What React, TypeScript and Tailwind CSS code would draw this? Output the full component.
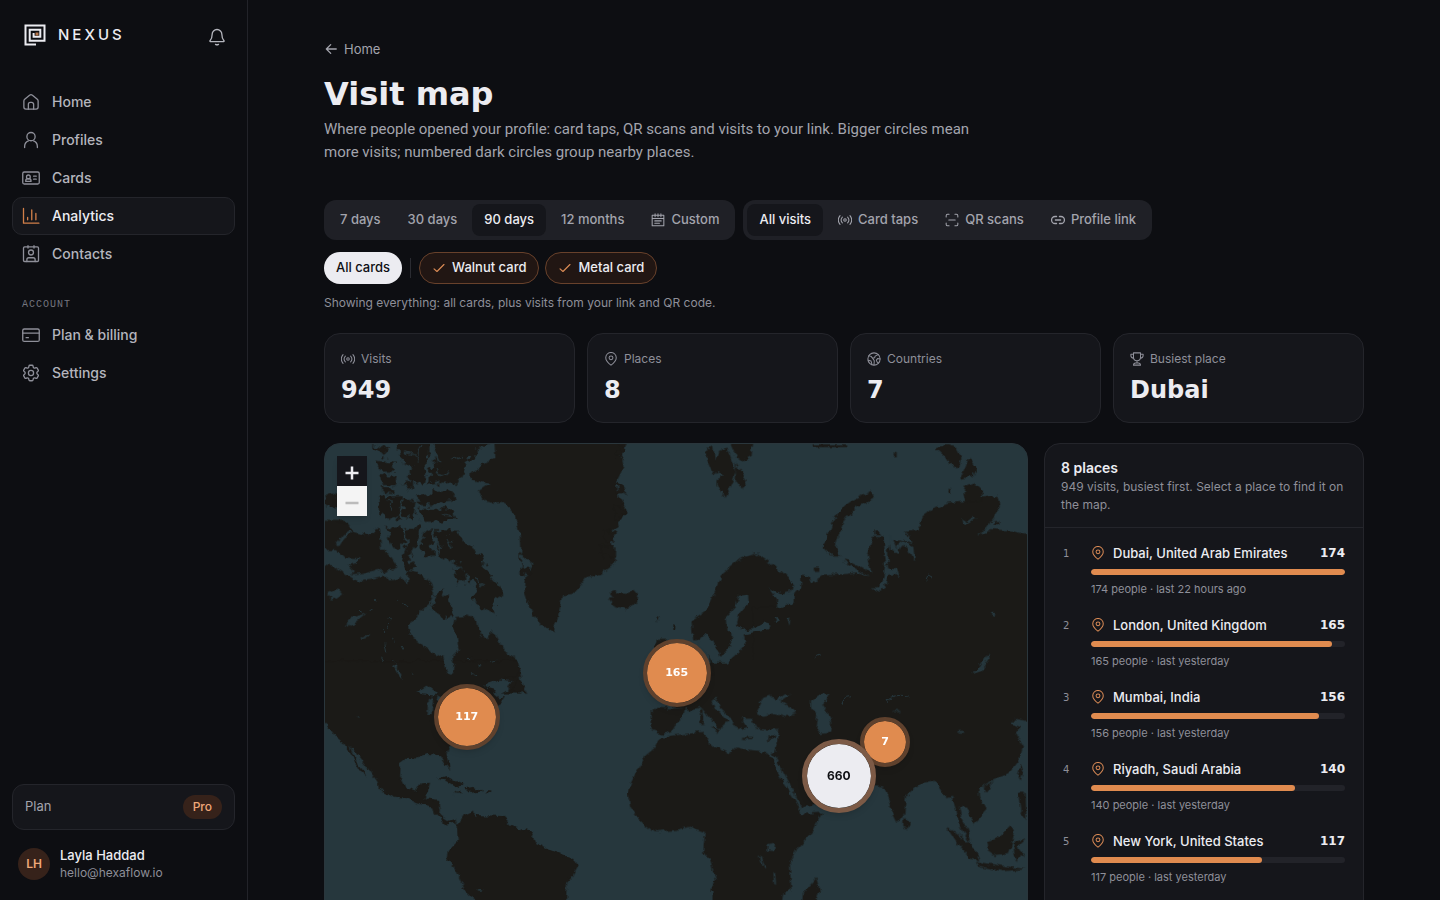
import type { ReactNode } from 'react';
import { HiOutlineCog6Tooth } from 'react-icons/hi2';

type IconProps = { className?: string };

function Icon({ className = 'size-[18px]', children }: IconProps & { children: ReactNode }) {
  return (
    <svg
      viewBox="0 0 24 24"
      fill="none"
      stroke="currentColor"
      strokeWidth={1.75}
      strokeLinecap="round"
      strokeLinejoin="round"
      aria-hidden="true"
      className={`shrink-0 ${className}`}
    >
      {children}
    </svg>
  );
}

const HomeIcon = (p: IconProps) => (
  <Icon {...p}>
    <path d="M2.5 10.6a3 3 0 0 1 1.100-2.300l6.500-5.300a3 3 0 0 1 3.800 0l6.500 5.300a3 3 0 0 1 1.100 2.300v8.200a2.700 2.700 0 0 1-2.700 2.700H5.200a2.700 2.700 0 0 1-2.700-2.700z" />
    <path d="M8.500 21.500V15a2.500 2.500 0 0 1 2.500-2.500h2a2.500 2.500 0 0 1 2.500 2.500v6.500" />
  </Icon>
);

const UserIcon = (p: IconProps) => (
  <Icon {...p}>
    <circle cx="12" cy="7.500" r="5.500" />
    <path d="M3.500 22v-1.500a8 8 0 0 1 5-7.300M20.500 22v-1.500a8 8 0 0 0-5-7.300" />
  </Icon>
);

const CardsIcon = (p: IconProps) => (
  <Icon {...p}>
    <rect x="1" y="4" width="22" height="16" rx="2" />
    <circle cx="8.500" cy="10.500" r="2.500" />
    <path d="M5 16.500v-1a2.500 2.500 0 0 1 2.500-2.500h2a2.500 2.500 0 0 1 2.500 2.500v1zM15.500 9.500H19M15.500 13.500H19" />
  </Icon>
);

const ChartIcon = (p: IconProps) => (
  <Icon {...p}>
    <path d="M2 2v19.500h20.500M7.500 17v-3M13 17V4M18.500 17V8.500" />
  </Icon>
);

const ContactIcon = (p: IconProps) => (
  <Icon {...p}>
    <rect x="2" y="2.500" width="20" height="19.500" rx="1.500" />
    <circle cx="12" cy="10" r="3.300" />
    <path d="M6.500 22v-2.500a2.500 2.500 0 0 1 2.500-2.500h6a2.500 2.500 0 0 1 2.500 2.500V22M8 1v3M16 1v3" />
  </Icon>
);

const BillingIcon = (p: IconProps) => (
  <Icon {...p}>
    <rect x="1" y="4" width="22" height="16.500" rx="2" />
    <path d="M1 9.500h22M5.500 15.500h3" />
  </Icon>
);

// The gear has wider built-in margins than the rest of the set
const SettingsIcon = ({ className = '' }: IconProps) => (
  <HiOutlineCog6Tooth className={`shrink-0 scale-115 ${className}`} />
);

const BellIcon = (p: IconProps) => (
  <Icon {...p}>
    <path d="M12 2a6.500 6.500 0 0 0-6.500 6.500c0 4.500-1 6.500-2.800 8.500-.4.500-.2 1.200.5 1.200h17.600c.7 0 .9-.7.5-1.200-1.800-2-2.800-4-2.800-8.500A6.500 6.500 0 0 0 12 2zM10 21.800c1.200.7 2.800.7 4 0" />
  </Icon>
);

const ArrowLeftIcon = (p: IconProps) => (
  <Icon {...p}>
    <path d="M21 12H4M11.500 4.500 4 12l7.500 7.500" strokeWidth={2.200} />
  </Icon>
);

const CalendarIcon = (p: IconProps) => (
  <Icon {...p}>
    <path d="M2 4h20v18H2zM2 9.500h20M7 1.500v5M12 1.500v5M17 1.500v5M6.500 13.500h11M6.500 17.500h8" />
  </Icon>
);

const TapIcon = (p: IconProps) => (
  <Icon {...p}>
    <circle cx="12" cy="12" r="2.200" />
    <path d="M7.500 7a7.500 7.500 0 0 0 0 10M16.500 7a7.500 7.500 0 0 1 0 10M3.500 4.500a12 12 0 0 0 0 15M20.500 4.500a12 12 0 0 1 0 15" />
  </Icon>
);

const ScanIcon = (p: IconProps) => (
  <Icon {...p}>
    <path d="M2 7V4.500A2.500 2.500 0 0 1 4.500 2H7M17 2h2.500A2.500 2.500 0 0 1 22 4.500V7M22 17v2.500a2.500 2.500 0 0 1-2.500 2.500H17M7 22H4.500A2.500 2.500 0 0 1 2 19.500V17M6.500 12h11" />
  </Icon>
);

const LinkIcon = (p: IconProps) => (
  <Icon {...p}>
    <path d="M9.500 18H7A6 6 0 0 1 7 6h2.500M14.500 6H17a6 6 0 0 1 0 12h-2.500M7.500 12h9" strokeWidth={2.200} />
  </Icon>
);

const PinIcon = (p: IconProps) => (
  <Icon {...p}>
    <path d="M12 22.500c-2.300-1.700-9-6.500-9-12.700a9 9 0 0 1 18 0c0 6.200-6.700 11-9 12.700z" />
    <circle cx="12" cy="10" r="3.300" />
  </Icon>
);

const GlobeIcon = (p: IconProps) => (
  <Icon {...p}>
    <circle cx="12" cy="12" r="10.500" />
    <path d="M3 6.500l4 1 2.500 3 3.500-.5 1-3 5-2.500M9.500 10.500l3 4.500-.5 7M2 14l5 1.500 1.500 6M22.500 12l-4-1-2.500 3 1.500 3.500 2 1.500" />
  </Icon>
);

const TrophyIcon = (p: IconProps) => (
  <Icon {...p}>
    <path d="M6 1.500h12V9a6 6 0 0 1-12 0zM6 4H1.500v2A4.500 4.500 0 0 0 6 10.500M18 4h4.500v2a4.500 4.500 0 0 1-4.500 4.500M12 15v4M6 22.500a3.500 3.500 0 0 1 3.500-3.500h5a3.500 3.500 0 0 1 3.500 3.500z" />
  </Icon>
);

const CheckIcon = (p: IconProps) => (
  <Icon {...p}>
    <path d="M3.500 13.500l5 4.500L20.500 6" strokeWidth={2} />
  </Icon>
);

const Logo = () => (
  <svg viewBox="0 0 22 22" fill="none" aria-hidden="true" className="size-[22px] shrink-0">
    <path d="M12 20.500H1.500V1.500H20.500V16.800H5.700V5.700H16.300V12.800H9.600V9" stroke="#ececf1" strokeWidth="2" />
    <rect x="11.500" y="8.500" width="3" height="3" fill="#b87548" />
  </svg>
);

const mainNav = [
  { label: 'Home', icon: HomeIcon },
  { label: 'Profiles', icon: UserIcon },
  { label: 'Cards', icon: CardsIcon },
  { label: 'Analytics', icon: ChartIcon, active: true },
  { label: 'Contacts', icon: ContactIcon },
];

const accountNav = [
  { label: 'Plan & billing', icon: BillingIcon },
  { label: 'Settings', icon: SettingsIcon },
];

const ranges = [
  { label: '7 days' },
  { label: '30 days' },
  { label: '90 days', active: true },
  { label: '12 months' },
  { label: 'Custom', icon: CalendarIcon },
];

const sources = [
  { label: 'All visits', active: true },
  { label: 'Card taps', icon: TapIcon },
  { label: 'QR scans', icon: ScanIcon },
  { label: 'Profile link', icon: LinkIcon },
];

const stats = [
  { label: 'Visits', value: '949', icon: TapIcon },
  { label: 'Places', value: '8', icon: PinIcon },
  { label: 'Countries', value: '7', icon: GlobeIcon },
  { label: 'Busiest place', value: 'Dubai', icon: TrophyIcon },
];

const places = [
  { name: 'Dubai, United Arab Emirates', visits: 174, last: '22 hours ago' },
  { name: 'London, United Kingdom', visits: 165, last: 'yesterday' },
  { name: 'Mumbai, India', visits: 156, last: 'yesterday' },
  { name: 'Riyadh, Saudi Arabia', visits: 140, last: 'yesterday' },
  { name: 'New York, United States', visits: 117, last: 'yesterday' },
];

type NavItem = { label: string; icon: (p: IconProps) => ReactNode; active?: boolean };

function NavList({ items }: { items: NavItem[] }) {
  return (
    <ul>
      {items.map((item) => (
        <li key={item.label}>
          <a
            href="#"
            aria-current={item.active ? 'page' : undefined}
            className={`flex h-[38px] items-center gap-3 rounded-[10px] border px-[9px] text-sm font-medium ${
              item.active ? 'border-[#24252b] bg-[#15161b] text-[#ececf1]' : 'border-transparent text-[#b4b5bd]'
            }`}
          >
            <item.icon className={item.active ? 'size-[18px] text-[#d17f49]' : 'size-[18px] text-[#8e8f99]'} />
            {item.label}
          </a>
        </li>
      ))}
    </ul>
  );
}

function Sidebar() {
  return (
    <aside className="sticky top-0 flex h-screen w-[248px] shrink-0 flex-col border-r border-[#222329] px-3 pb-4">
      <div className="flex items-center justify-between pt-[23px] pr-2 pl-3">
        <a href="#" className="flex items-center gap-3 text-[15px] font-medium tracking-[0.2em]">
          <Logo />
          NEXUS
        </a>
        <button type="button" aria-label="Notifications" className="mt-1 flex size-5 items-center justify-center text-[#b4b5bd]">
          <BellIcon />
        </button>
      </div>

      <nav className="mt-9 grow">
        <NavList items={mainNav} />
        <h2 className="mt-[22px] mb-px px-[10px] font-['Liberation_Mono',monospace] text-[10px] leading-5 tracking-widest text-[#74757f]">
          ACCOUNT
        </h2>
        <NavList items={accountNav} />
      </nav>

      <div className="flex h-[46px] items-center justify-between rounded-xl border border-[#24252b] bg-[#15161b] px-3 text-[13px] text-[#a3a4ad]">
        Plan
        <span className="rounded-full bg-[#36221a] px-[10px] py-[3px] text-xs leading-[18px] font-medium text-[#f0a878]">Pro</span>
      </div>
      <div className="mt-[14px] flex items-center gap-[10px] px-[6px] py-[2px]">
        <span className="flex size-8 items-center justify-center rounded-full bg-[#36221a] text-xs font-semibold text-[#f0a878]">LH</span>
        <div>
          <p className="text-[13px] leading-[18px] font-medium">Layla Haddad</p>
          <p className="text-xs leading-[18px] text-[#8e8f99]">hello@hexaflow.io</p>
        </div>
      </div>
    </aside>
  );
}

type Segment = { label: string; icon?: (p: IconProps) => ReactNode; active?: boolean };

function Segmented({ label, items }: { label: string; items: Segment[] }) {
  return (
    <div role="group" aria-label={label} className="flex gap-[3px] rounded-xl bg-[#1f2026] p-1">
      {items.map((item) => (
        <button
          key={item.label}
          type="button"
          aria-pressed={!!item.active}
          className={`flex h-8 items-center gap-[6px] rounded-lg px-3 text-[13px] font-medium whitespace-nowrap ${
            item.active ? 'bg-[#15161b] text-[#ececf1]' : 'text-[#a3a4ad]'
          }`}
        >
          {item.icon && <item.icon className="size-[14px]" />}
          {item.label}
        </button>
      ))}
    </div>
  );
}

function Filters() {
  return (
    <div className="mt-9">
      <div className="flex flex-wrap gap-2">
        <Segmented label="Period" items={ranges} />
        <Segmented label="Source" items={sources} />
      </div>
      <div className="mt-3 flex items-center gap-2 text-[13px] font-medium">
        <button type="button" className="h-8 rounded-full bg-[#ececf1] px-3 text-[#0e0f13]">
          All cards
        </button>
        <span className="h-5 w-px bg-[#2a2b31]" />
        <div className="flex gap-[6px]">
          {['Walnut card', 'Metal card'].map((card) => (
            <button
              key={card}
              type="button"
              aria-pressed="true"
              className="flex h-8 items-center gap-[6px] rounded-full border border-[#68412b] bg-[#211613] px-3"
            >
              <CheckIcon className="size-[14px] text-[#d98a55]" />
              {card}
            </button>
          ))}
        </div>
      </div>
      <p className="mt-[10px] text-xs leading-[18px] text-[#8e8f99]">
        Showing everything: all cards, plus visits from your link and QR code.
      </p>
    </div>
  );
}

// World tile artwork. Land is drawn first, then inland seas and straits on top of it.
function WorldMap() {
  return (
    <svg
      viewBox="0 0 2112 1680"
      preserveAspectRatio="xMidYMin slice"
      aria-hidden="true"
      className="block h-full w-full"
    >
      <defs>
        <filter id="coast" x="0" y="0" width="100%" height="100%" colorInterpolationFilters="sRGB">
          <feTurbulence type="fractalNoise" baseFrequency="0.045" numOctaves="3" seed="7" result="noise" />
          <feDisplacementMap in="SourceGraphic" in2="noise" scale="20" xChannelSelector="R" yChannelSelector="G" />
        </filter>
        <filter id="fjords" x="0" y="0" width="100%" height="100%" colorInterpolationFilters="sRGB">
          <feTurbulence type="fractalNoise" baseFrequency="0.05" numOctaves="2" seed="3" result="noise" />
          <feDisplacementMap in="SourceGraphic" in2="noise" scale="34" xChannelSelector="R" yChannelSelector="G" />
        </filter>
      </defs>

      <rect width="2112" height="1680" fill="#26373d" />

      <g filter="url(#coast)">
        <g fill="#1b1a17">
          {/* Canada and Greenland */}
          <g transform="translate(-12 -9)">
            <path d="M-20 240H75L100 275L150 285L165 265L178 265L180 320L210 350L230 380L190 395L170 385L130 400L85 405L110 420L150 415L190 405L210 420L240 410L260 430L262 390L300 400L330 430L340 460L325 490L290 520L265 560L275 590L310 620L350 640L370 650L378 690L395 700L400 680L395 650L415 630L410 600L400 560L405 530L440 525L470 540L478 585L500 600L515 570L530 590L550 630L590 660L600 720V760H-20Z" />
            <path d="M520 -20L525 50L450 95L450 115L505 130L475 150L490 180L510 185L550 183L580 215L598 280L600 340L640 370L620 400L612 450L640 530L665 555L700 572L720 500L725 465L760 460L800 410L840 400L880 370L885 350L870 280L900 240L920 210L895 170L890 120L910 80L905 40L925 -20Z" />
          </g>
          {/* North Atlantic, Scandinavia */}
          <g transform="translate(648 -9)">
            <path d="M205 455L218 470L205 472L215 485L222 498L255 508L290 485L295 465L280 448L260 460L235 458L225 448Z" />
            <path d="M500 25L520 20L525 60L535 30L560 20L580 70L588 90L578 120L555 170L530 132L530 118L550 108L515 90L502 60Z" />
            <path d="M565 -10L642 -10L635 48L610 62L590 48ZM588 65L618 120L605 142L588 120Z" />
            <path d="M455 540L500 510L530 440L545 400L600 355L650 338L680 360L720 390L762 430L755 450L735 455L740 490L780 480V760H440V700L515 670L500 620L480 600L460 600Z" />
            <path d="M346 598L384 598L372 625L400 660L395 720L340 720L352 660L340 630ZM350 528h8v12h-8zM400 553h6v14h-6z" />
          </g>
          {/* Siberia */}
          <g transform="translate(1368 -9)">
            <path d="M-80 500H0L35 490L45 455L65 435L65 405L85 408L90 430L130 405L200 400L230 395L270 408L230 385L190 360L210 362L275 395L265 340L280 288L310 290L320 330L345 300L365 300L400 310L380 270L420 265L430 230L460 205L500 190L560 180L590 172L655 165L662 200L620 260L600 285L640 265L700 270L770 290V760H-80Z" />
            <path d="M275 150L284 170L230 202L198 230L178 280L168 320L182 348L155 347L130 320L142 285L155 250L185 203L220 178Z" />
            <path d="M468 20L500 12L530 18L547 50L540 80L510 68L495 45ZM570 50L592 85L582 107L543 114ZM553 160L558 135L580 126L608 150L608 180L560 184Z" />
            <path d="M103 378h16v16h-16zM288 272h12v12h-12zM340 36h12v10h-12zM505 145h10v10h-10zM644 238h14v12h-14zM100 10h100v8h-100z" />
          </g>
          {/* Americas */}
          <g transform="translate(-12 651)">
            <path d="M-20 0H590L600 30L585 45L540 60L490 78L535 115L555 105L540 128L500 150L440 220L385 260L378 285L388 330L370 310L355 285L320 282L290 292L260 290L240 305L238 350L255 385L285 395L300 370L328 368L315 415L355 420L360 450L358 470L380 484L405 476L412 500L402 488L375 494L340 460L335 440L290 430L260 415L220 410L175 385L170 365L130 310L110 285L85 252L100 290L138 350L120 335L90 285L70 250L45 230L15 190L-20 160Z" />
            <path d="M568 92L590 58L604 64L620 98L600 92L588 98Z" />
            <path d="M350 357L375 348L432 376L410 382L375 362ZM435 385L460 380L487 394L450 399ZM498 394h14v6h-14zM403 395h16v6h-16z" />
            <path d="M408 500L430 465L460 452L465 465L545 468L575 500L630 515L645 550L700 575L765 600L775 618L760 645L740 670L735 760L700 880L620 1020L520 1060L505 860L472 722L435 695L400 620L380 600L385 570L412 540Z" />
          </g>
          {/* Europe, Africa, South Asia */}
          <g transform="translate(888 651)">
            <path d="M95 143L195 145L190 170L165 195L155 212L130 220L95 210Z" />
            <path d="M120 235L145 228L250 215L265 230L262 250L330 280L350 262L375 270L440 278L455 290L480 350L520 410L540 445L545 462L607 458L580 515L530 570L510 605L515 690L490 705L480 780V1040H320L275 740L275 690L288 660L270 600L250 575L255 517L210 500L170 510L105 517L60 485L30 440L25 400L35 360L75 290L100 270Z" />
            <path d="M160 40H280V0H1260V185L1190 173L1175 190L1207 200L1190 222L1212 260L1200 300L1170 340L1120 360L1078 385L1080 410L1102 450L1065 492L1045 447L1022 440L1030 475L1045 505L1058 540L1050 545L1020 500L1012 450L998 410L983 415L960 378L945 358L915 365L885 387L860 410L855 460L835 487L812 440L795 380L765 375L700 380L640 415L580 435L545 442L510 370L470 295L455 280L465 275L475 240L478 205L440 208L410 205L395 175L365 175L380 200L355 210L330 170L300 140L288 112L275 122L285 145L328 188L312 192L302 208L275 178L248 142L215 150L160 140Z" />
            <path d="M852 470L872 490L866 505L852 502ZM1097 376L1117 368L1113 386L1100 394ZM1206 312L1214 330L1205 358L1197 345ZM1198 398L1220 398L1222 480L1204 455Z" />
            <path d="M983 503L1012 518L1062 562L1078 602L1052 596L1010 545ZM1072 605L1100 610L1160 620L1220 628L1150 634L1080 618ZM1102 545L1140 530L1175 496L1188 515L1170 582L1130 588L1105 570ZM1183 550L1220 538L1196 562L1216 592L1202 582L1196 604L1186 582Z" />
            <path d="M370 230h26v6h-26zM442 232l24 -6v8l-20 6zM273 203L300 207L295 218ZM240 165h12v26h-11zM243 146h8v16h-8z" />
            <path d="M590 655L600 690L570 800L545 790L550 700Z" />
          </g>
        </g>

        <g fill="#26373d">
          {/* Great Lakes, St Lawrence, James Bay */}
          <g transform="translate(-12 651)">
            <path d="M288 97L320 73L348 93L340 106L310 103ZM321 118L335 108L337 120L333 162L321 160ZM345 105L368 112L360 128ZM488 76L540 58L572 62L560 92L530 108L522 90ZM368 -10L388 -10L402 15L396 44L380 38ZM216 15L230 12L228 26L242 36L248 60L236 52Z" />
            <path d="M462 450h5v24h-5zM108 165h5v4h-5zM472 688h12v5h-12z" />
          </g>
          {/* Northern lakes and inlets */}
          <g transform="translate(-12 -9)">
            <path d="M-10 325L45 325L70 350L120 353L105 368L80 372L102 395L85 408L40 378L-10 372ZM44 312L66 284L90 268L94 276L68 294L52 318Z" />
            <path d="M76 548L100 530L138 518L112 540L88 560ZM18 460L52 443L64 458L34 478ZM118 592L148 580L144 588L122 596Z" />
          </g>
          {/* Baltic and White Sea */}
          <g transform="translate(648 -9)">
            <path d="M600 465L625 462L627 485L597 520L592 550L602 568L640 563L672 546L692 552L688 570L650 574L612 582L617 610L592 640L560 667L520 667L505 640L480 615L470 598L500 583L520 600L542 650L568 620L580 590L560 572L558 530L585 500Z" />
            <path d="M684 436L720 460L765 462L765 484L728 502L712 498L712 476Z" />
            <path d="M702 530L718 536L712 548ZM742 536L752 530L750 556Z" />
          </g>
          {/* Ob, Yenisei, Baikal */}
          <g transform="translate(1368 -9)">
            <path d="M311 318L322 318L326 383L350 386L358 410L345 402L327 402L317 440L300 454L273 440L298 440L311 415L317 370ZM333 285L352 325L365 302L402 318L407 362L397 352L385 322L367 316L355 337L333 325Z" />
            <path d="M550 232L560 234L566 242L585 228L588 234L566 248L552 244ZM628 638L632 655L607 692L578 702L602 680ZM636 514h12v8h-12z" />
          </g>
          {/* Black Sea, Caspian, Lake Victoria */}
          <g transform="translate(888 651)">
            <path d="M430 110L450 103L470 120L502 98L512 104L485 122L520 145L528 160L500 171L460 160L430 167L408 155ZM574 120L610 96L627 103L620 125L605 130L625 160L635 180L632 217L605 222L590 205L595 170L574 140ZM444 555L467 551L462 577L442 575Z" />
            <path d="M420 588L426 588L436 626L430 624ZM461 640L467 640L469 676L463 672ZM1018 212h14v5h-14zM820 152h20v4h-20z" />
          </g>
        </g>
        <g fill="none" stroke="#26373d" strokeWidth="3">
          <path d="M1688 772Q1706 750 1756 758M1555 782Q1560 762 1580 760M1474 650Q1478 636 1492 634M1808 408L1814 394L1826 400" />
          <path d="M190 520L196 530M192 544L188 556M180 600L186 630M200 586L206 600M172 560L178 566M230 480L250 486M214 470L222 474M430 650L440 640M500 655L515 650M458 664L470 668M150 470L160 476M134 498L146 494M96 500L108 506M250 560L254 572M226 610L232 622M206 650L214 660M170 640L176 652M258 690L266 698M440 690L452 694" />
        </g>
      </g>

      {/* Arctic archipelago */}
      <g filter="url(#fjords)">
        <g fill="#1b1a17" transform="translate(-12 -9)">
          <path d="M336 -20L510 -20L510 10L470 30L440 60L430 90L410 130L385 122L325 132L328 90L345 60Z" />
          <path d="M228 -20L326 -20L320 70L308 134L258 114L272 84L238 55Z" />
          <path d="M285 170L330 156L388 150L406 178L355 182L330 194L295 192ZM296 204L398 206L408 238L306 240Z" />
          <path d="M244 178L284 178L278 236L248 228ZM176 168L240 166L238 226L215 238L178 217ZM164 56L217 62L222 92L180 92ZM178 102L228 105L222 136L188 132ZM244 130L280 120L280 146ZM-10 180L50 158L55 200L20 196ZM150 10L205 20L190 45ZM186 140L224 144L218 160L190 158Z" />
          <path d="M198 262L244 260L250 307L228 330L203 297ZM254 263L300 260L290 307L278 322L267 352L284 380L262 392L243 362L258 310Z" />
          <path d="M345 268L415 270L430 300L482 345L502 398L542 440L545 466L520 478L528 525L490 505L450 478L470 440L440 405L415 372L372 360L355 345ZM318 263L338 268L332 347L310 352L302 310Z" />
          <path d="M340 468L366 453L394 500L404 517L376 536L328 502ZM396 382L432 392L438 422L408 427Z" />
          <path d="M596 340L606 350L602 380L620 372L632 380L616 410L604 398Z" />
        </g>
        {/* east Greenland fjords */}
        <g fill="#1b1a17" transform="translate(648 -9)">
          <path d="M230 10L262 20L240 60ZM225 110L256 150L236 160ZM220 190L256 215L226 240ZM190 265L232 275L220 300L190 295ZM175 310L226 320L224 350L190 345Z" />
        </g>
        {/* narrow channels through the islands */}
        <g fill="none" stroke="#26373d" strokeWidth="5" transform="translate(-12 -9)">
          <path d="M330 0L345 40L360 70M296 20L290 60M390 60L420 50M250 30L285 44M345 90L385 100M206 180L212 210M350 300L362 320L356 344M380 290L392 320M460 410L490 430M370 222L396 226" />
        </g>
      </g>
    </svg>
  );
}

function VisitMap() {
  return (
    <div className="relative h-[560px] overflow-hidden rounded-2xl border border-[#2a363c] bg-[#26373d]">
      <WorldMap />
      <div className="absolute top-3 left-3 flex flex-col shadow-md">
        <button type="button" aria-label="Zoom in" className="flex size-[30px] items-center justify-center bg-[#15161b]">
          <svg viewBox="0 0 14 14" className="mt-1 size-[14px]" stroke="#ececf1" strokeWidth="2.500">
            <path d="M0.500 7h13M7 0.500v13" />
          </svg>
        </button>
        <button type="button" aria-label="Zoom out" disabled className="flex size-[30px] items-center justify-center bg-[#f4f4f4]">
          <svg viewBox="0 0 14 14" className="mt-1 size-[14px]" stroke="#bbbbbb" strokeWidth="2.500">
            <path d="M0.500 7h13" />
          </svg>
        </button>
      </div>

      <button
        type="button"
        className="absolute top-[273px] left-[20.200%] flex size-[66px] -translate-1/2 items-center justify-center rounded-full border-4 border-[#5f412d] bg-[#e08b4f] bg-clip-padding font-['DejaVu_Sans',sans-serif] text-[11px] font-bold text-white shadow-md"
      >
        117
      </button>
      <button
        type="button"
        className="absolute top-[229px] left-[50.100%] flex size-[68px] -translate-1/2 items-center justify-center rounded-full border-4 border-[#5f412d] bg-[#e08b4f] bg-clip-padding font-['DejaVu_Sans',sans-serif] text-[11px] font-bold text-white shadow-md"
      >
        165
      </button>
      <button
        type="button"
        className="absolute top-[298px] left-[79.800%] flex size-[50px] -translate-1/2 items-center justify-center rounded-full border-4 border-[#5f412d] bg-[#e08b4f] bg-clip-padding font-['DejaVu_Sans',sans-serif] text-[11px] font-bold text-white shadow-md"
      >
        7
      </button>
      <button
        type="button"
        className="absolute top-[332px] left-[73.200%] flex size-[74px] -translate-1/2 items-center justify-center rounded-full border-5 border-[#7c5a46] bg-[#ececf1] bg-clip-padding text-xs font-bold text-[#0e0f13] shadow-md"
      >
        660
      </button>
    </div>
  );
}

function PlacesPanel() {
  const max = places[0].visits;

  return (
    <section className="overflow-hidden rounded-2xl border border-[#24252b] bg-[#15161b]">
      <header className="border-b border-[#24252b] px-4 py-[13px]">
        <h2 className="text-sm leading-[21px] font-semibold">8 places</h2>
        <p className="text-xs leading-[18px] text-[#8e8f99]">949 visits, busiest first. Select a place to find it on the map.</p>
      </header>
      <ol className="px-2 py-[6px]">
        {places.map((place, index) => (
          <li key={place.name}>
            <button type="button" className="flex w-full gap-2 px-[10px] py-[9px] text-left">
              <span className="w-5 font-['DejaVu_Sans',sans-serif] text-[10px] leading-[22px] text-[#8e8f99]">{index + 1}</span>
              <span className="min-w-0 grow">
                <span className="flex items-center gap-2 text-[13px] leading-5 font-medium">
                  <PinIcon className="size-[14px] text-[#d98a55]" />
                  <span className="grow truncate">{place.name}</span>
                  <span className="font-['DejaVu_Sans',sans-serif] text-xs leading-5 font-bold">{place.visits}</span>
                </span>
                <span className="mt-[6px] block h-[6px] overflow-hidden rounded-full bg-[#222329]">
                  <span className="block h-full rounded-full bg-[#e08b4f]" style={{ width: `${(place.visits / max) * 100}%` }} />
                </span>
                <span className="mt-[6px] block text-[11px] leading-4 text-[#8e8f99]">
                  {place.visits} people · last {place.last}
                </span>
              </span>
            </button>
          </li>
        ))}
      </ol>
    </section>
  );
}

export default function App() {
  return (
    <div className="flex min-h-screen bg-[#0d0e12] font-[Inter,sans-serif] text-[#ececf1]">
      <Sidebar />
      <main className="h-screen min-w-0 grow overflow-hidden">
        <div className="mx-auto max-w-[1120px] px-10 pt-[38px]">
          <a href="#" className="inline-flex items-center gap-[6px] text-[13px] leading-5 text-[#a3a4ad]">
            <ArrowLeftIcon className="size-[14px]" />
            Home
          </a>
          <h1 className="mt-3 font-['DejaVu_Sans',sans-serif] text-[32px] leading-10 font-bold">Visit map</h1>
          <p className="mt-1 max-w-[680px] font-[Roboto,sans-serif] text-[15px] leading-[23px] text-[#a3a4ad]">
            Where people opened your profile: card taps, QR scans and visits to your link. Bigger circles mean more visits;
            numbered dark circles group nearby places.
          </p>

          <Filters />

          <div className="mt-[21px] grid grid-cols-4 gap-3">
            {stats.map((stat) => (
              <div key={stat.label} className="h-[90px] rounded-2xl border border-[#24252b] bg-[#15161b] px-4 pt-4">
                <p className="flex items-center gap-[6px] text-xs leading-[18px] text-[#8e8f99]">
                  <stat.icon className="size-[14px]" />
                  {stat.label}
                </p>
                <p className="mt-1 font-['DejaVu_Sans',sans-serif] text-2xl leading-9 font-bold">{stat.value}</p>
              </div>
            ))}
          </div>

          <div className="mt-5 grid grid-cols-[minmax(0,1fr)_320px] gap-4">
            <VisitMap />
            <PlacesPanel />
          </div>
        </div>
      </main>
    </div>
  );
}
